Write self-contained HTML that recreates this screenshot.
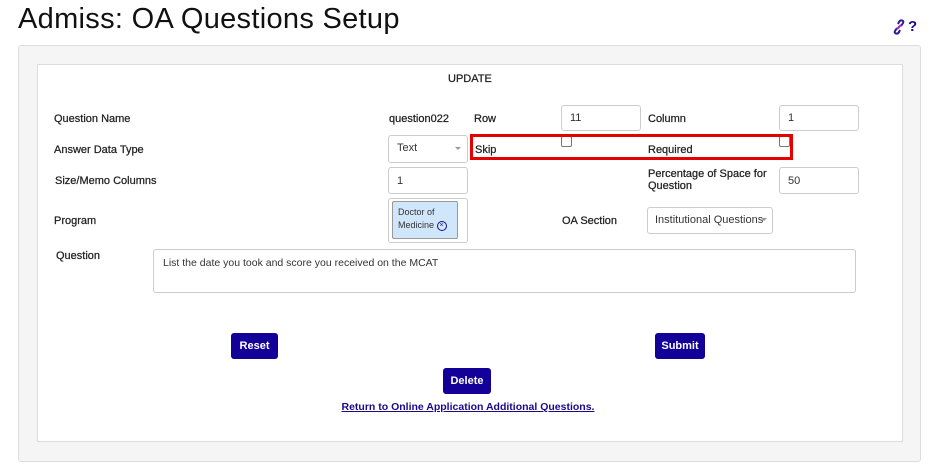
<!DOCTYPE html>
<html><head><style>
body{margin:0;width:936px;height:474px;background:#fff;font-family:"Liberation Sans",Arial,sans-serif;position:relative;overflow:hidden;color:#333}
.a{position:absolute}
.t{font-size:11px;color:#222;line-height:13px;-webkit-text-stroke:0.25px #222}
.in{position:absolute;border:1px solid #ccc;border-radius:3px;background:#fff;box-sizing:border-box;font-size:11px;color:#333;padding-left:8px}
.cb{position:absolute;width:9px;height:9px;border:1px solid #767676;border-radius:2px;background:#fff}
.btn{position:absolute;background:#130099;color:#fff;font-size:11px;border-radius:3px;text-align:center;font-weight:bold}
.car{position:absolute;width:0;height:0;border-left:3px solid transparent;border-right:3px solid transparent;border-top:3px solid #999}
</style></head><body>
<div class="a" style="left:18px;top:3px;font-size:29px;color:#111;letter-spacing:0.3px">Admiss: OA Questions Setup</div>
<svg class="a" style="left:892px;top:19px" width="14" height="16" viewBox="0 0 14 16"><g fill="none" stroke="#2a1a9a" stroke-width="2"><path d="M5 9 L3 12 Q2 14 4 14.5 Q6 15 7 13 L8 11"/><path d="M9 7 L11 4 Q12 2 10 1.5 Q8 1 7 3 L6 5"/><path d="M5 10 L9 6" stroke="#b020c0"/></g></svg>
<div class="a" style="left:908px;top:18px;font-size:15px;font-weight:bold;color:#1a0a8a">?</div>
<div class="a" style="left:18px;top:45px;width:901px;height:415px;background:#f5f5f5;border:1px solid #ddd;border-radius:3px"></div>
<div class="a" style="left:37px;top:64px;width:864px;height:376px;background:#fff;border:1px solid #ddd"></div>
<div class="a t" style="left:448px;top:73px">UPDATE</div>

<div class="a t" style="left:54px;top:113px">Question Name</div>
<div class="a t" style="left:389px;top:113px">question022</div>
<div class="a t" style="left:474px;top:113px">Row</div>
<div class="in" style="left:561px;top:105px;width:80px;height:26px;line-height:25px">11</div>
<div class="a t" style="left:648px;top:113px">Column</div>
<div class="in" style="left:779px;top:105px;width:80px;height:26px;line-height:25px">1</div>

<div class="a t" style="left:54px;top:144px">Answer Data Type</div>
<div class="in" style="left:388px;top:135px;width:80px;height:28px;line-height:25px">Text</div>
<div class="car" style="left:455px;top:147px"></div>
<div class="a t" style="left:475px;top:144px">Skip</div>
<div class="cb" style="left:561px;top:136px"></div>
<div class="a t" style="left:648px;top:144px">Required</div>
<div class="cb" style="left:779px;top:136px"></div>
<div class="a" style="left:470px;top:134px;width:317px;height:20px;border:3px solid #e50000"></div>

<div class="a t" style="left:55px;top:175px">Size/Memo Columns</div>
<div class="in" style="left:388px;top:167px;width:80px;height:27px;line-height:26px">1</div>
<div class="a t" style="left:648px;top:168px;line-height:12px">Percentage of Space for<br>Question</div>
<div class="in" style="left:779px;top:167px;width:80px;height:27px;line-height:26px">50</div>

<div class="a t" style="left:54px;top:215px">Program</div>
<div class="in" style="left:388px;top:198px;width:80px;height:45px;padding:0"></div>
<div class="a" style="left:392px;top:201px;width:66px;height:38px;background:#cfe6fb;border:1px solid #999;border-radius:2px;font-size:9px;color:#333;line-height:13px;padding:4px 0 0 5px;box-sizing:border-box">Doctor of<br>Medicine <span style="display:inline-block;width:8px;height:8px;border:1.5px solid #1a0a8a;border-radius:50%;font-size:7px;line-height:8px;text-align:center;color:#1a0a8a;vertical-align:middle">×</span></div>
<div class="a t" style="left:562px;top:215px">OA Section</div>
<div class="in" style="left:647px;top:207px;width:126px;height:27px;line-height:25px;padding-left:7px">Institutional Questions</div>
<div class="car" style="left:761px;top:218px"></div>

<div class="a t" style="left:56px;top:250px">Question</div>
<div class="in" style="left:153px;top:249px;width:703px;height:44px;padding:7px 0 0 9px;font-size:10.5px;line-height:13px">List the date you took and score you received on the MCAT</div>

<div class="btn" style="left:231px;top:333px;width:47px;height:26px;line-height:26px">Reset</div>
<div class="btn" style="left:655px;top:333px;width:50px;height:26px;line-height:26px">Submit</div>
<div class="btn" style="left:443px;top:368px;width:48px;height:26px;line-height:26px">Delete</div>
<div class="a" style="left:0;width:936px;top:401px;text-align:center;font-size:10.5px;font-weight:bold;color:#1a0a8a;text-decoration:underline">Return to Online Application Additional Questions.</div>
</body></html>
